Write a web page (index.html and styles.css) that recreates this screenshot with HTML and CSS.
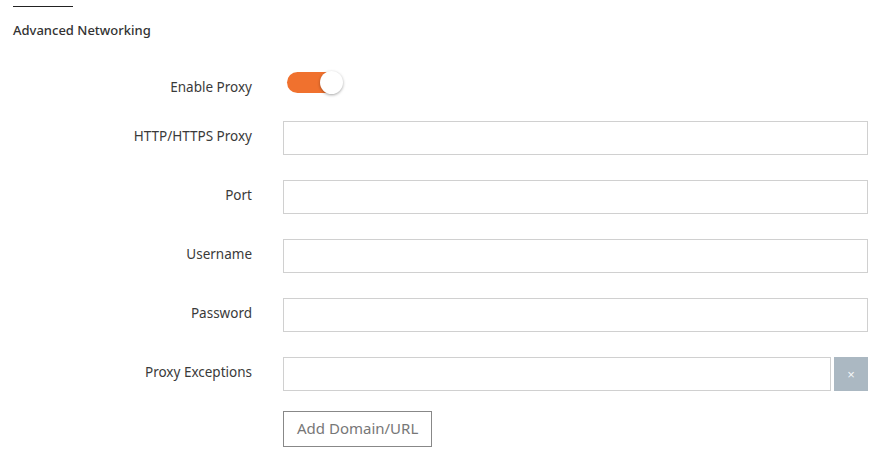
FILE: index.html
```
<!DOCTYPE html>
<html lang="en">

<head>
    <meta charset="UTF-8">
    <meta name="viewport" content="width=device-width, initial-scale=1.0">
    <title>Advanced Networking</title>
    <link rel="stylesheet" href="styles.css">
</head>

<body>
    <div class="rule"></div>
    <h2 class="section-title">Advanced Networking</h2>

    <form class="proxy-form">
        <div class="field toggle-field">
            <label for="enable-proxy">Enable Proxy</label>
            <label class="switch">
                <input type="checkbox" id="enable-proxy" checked>
                <span class="slider"></span>
            </label>
        </div>

        <div class="field">
            <label for="proxy-host">HTTP/HTTPS Proxy</label>
            <input type="text" id="proxy-host">
        </div>

        <div class="field">
            <label for="proxy-port">Port</label>
            <input type="text" id="proxy-port">
        </div>

        <div class="field">
            <label for="proxy-user">Username</label>
            <input type="text" id="proxy-user">
        </div>

        <div class="field">
            <label for="proxy-pass">Password</label>
            <input type="password" id="proxy-pass">
        </div>

        <div class="field">
            <label for="proxy-exception">Proxy Exceptions</label>
            <div class="exception-row">
                <input type="text" id="proxy-exception">
                <button type="button" class="remove-btn">&times;</button>
            </div>
        </div>

        <div class="field add-field">
            <span></span>
            <div>
                <button type="button" class="add-btn">Add Domain/URL</button>
            </div>
        </div>
    </form>
</body>

</html>
```

FILE: styles.css
```
body {
    font-family: "Noto Sans", sans-serif;
    font-size: 13.5px;
    color: #333;
    margin: 0;
    padding: 0 5px 0 13px;
    background: #fff;
}

.rule {
    width: 60px;
    height: 1px;
    margin-top: 6px;
    background-color: #222;
}

.section-title {
    margin: 14px 0 0 0;
    font-size: 13px;
    line-height: 18px;
    font-weight: 500;
    color: #333;
}

.proxy-form {
    display: flex;
    flex-direction: column;
    gap: 25px;
    margin-top: 31px;
}

.field {
    display: grid;
    grid-template-columns: 239px 1fr;
    column-gap: 31px;
    align-items: center;
}

.field > label {
    text-align: right;
    line-height: 18px;
    padding-bottom: 4px;
    color: #3a3a3a;
}

.toggle-field {
    height: 26px;
    align-items: start;
}

.toggle-field > label:first-child {
    align-self: end;
    padding-bottom: 0;
}

input[type="text"],
input[type="password"] {
    box-sizing: border-box;
    width: 100%;
    height: 34px;
    padding: 6px 10px;
    font-size: 13px;
    font-family: inherit;
    border: 1px solid #d0d0d0;
    border-radius: 0;
    outline: none;
}

.field > .switch {
    position: relative;
    display: inline-block;
    width: 57px;
    height: 26px;
    padding: 0;
    margin-left: 4px;
}

.switch input {
    opacity: 0;
    width: 0;
    height: 0;
}

.slider {
    position: absolute;
    top: 2px;
    left: 0;
    width: 53px;
    height: 21px;
    border-radius: 11px;
    background-color: #ccc;
    cursor: pointer;
}

.slider::before {
    content: "";
    position: absolute;
    top: -1px;
    left: 0;
    width: 23px;
    height: 23px;
    border-radius: 50%;
    background-color: #fff;
    box-shadow: 0 1px 3px rgba(0, 0, 0, 0.35);
}

.switch input:checked + .slider {
    background-color: #f0712e;
}

.switch input:checked + .slider::before {
    left: 33px;
}

.exception-row {
    display: flex;
    gap: 3px;
}

.remove-btn {
    flex: 0 0 34px;
    height: 34px;
    padding: 0;
    border: none;
    background-color: #abb8c2;
    color: #f4f6f8;
    font-size: 13px;
    cursor: pointer;
}

.add-field {
    margin-top: -5px;
}

.add-btn {
    height: 36px;
    padding: 0 13px 3px;
    font-family: inherit;
    font-size: 15px;
    color: #777;
    background: #fff;
    border: 1px solid #888;
    border-radius: 0;
    cursor: pointer;
}
```
